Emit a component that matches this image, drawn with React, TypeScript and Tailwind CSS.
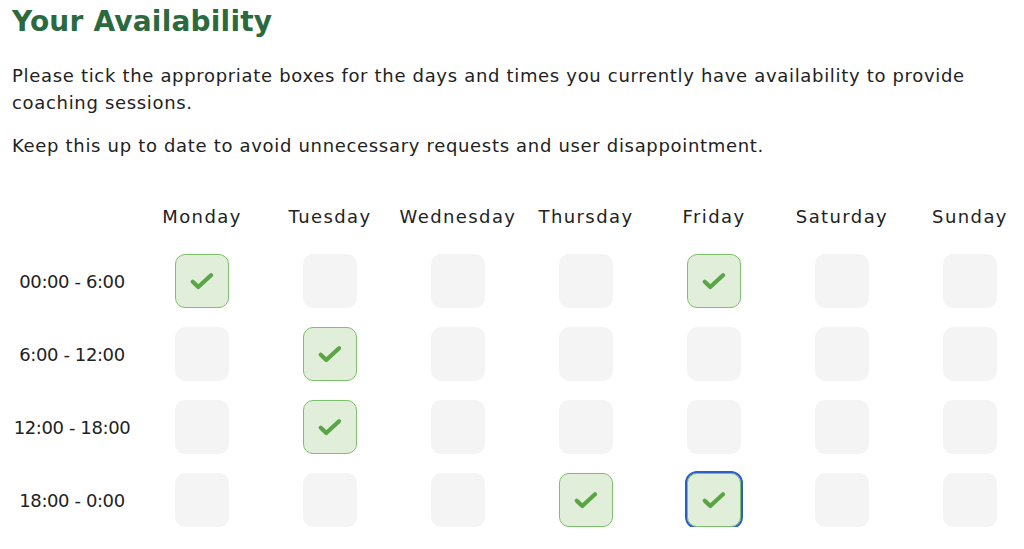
import React from "react";

const days = ["Monday", "Tuesday", "Wednesday", "Thursday", "Friday", "Saturday", "Sunday"];
const slots = ["00:00 - 6:00", "6:00 - 12:00", "12:00 - 18:00", "18:00 - 0:00"];
const checked: Record<string, boolean> = {
  "0-0": true,
  "0-4": true,
  "1-1": true,
  "2-1": true,
  "3-3": true,
  "3-4": true,
};

function Check() {
  return (
    <svg width="30" height="30" viewBox="0 0 24 24" fill="none">
      <path d="M4.6 12.6l4.4 4.2L19.2 7.4" stroke="#5aa646" strokeWidth="3.4" strokeLinecap="round" strokeLinejoin="round" />
    </svg>
  );
}

export default function App() {
  return (
    <div className="w-full overflow-hidden bg-white px-3 text-[#222222] font-['DejaVu_Sans',sans-serif]">
      <h1 className="pt-[2px] text-[28px] font-bold leading-[40px] tracking-[0.2px] text-[#2b6a3e]">Your Availability</h1>
      <p className="mt-[20px] text-[18px] leading-[27px] tracking-[0.68px]">
        Please tick the appropriate boxes for the days and times you currently have availability to provide coaching sessions.
      </p>
      <p className="mt-[16px] text-[18px] leading-[27px] tracking-[0.68px]">
        Keep this up to date to avoid unnecessary requests and user disappointment.
      </p>
      <div className="mt-[44px] w-[1022px]">
        <div className="grid grid-cols-[126px_repeat(7,128px)] h-[26px] items-center text-[18px] tracking-[1.4px]">
          <div />
          {days.map((d) => (
            <div key={d} className="whitespace-nowrap text-center">{d}</div>
          ))}
        </div>
        <div className="mt-[25px] grid grid-cols-[126px_repeat(7,128px)] gap-y-[19px]">
          {slots.map((s, r) => (
            <React.Fragment key={s}>
              <div className="flex h-[54px] items-center justify-center whitespace-nowrap pr-[6px] text-[18px] tracking-[-0.4px]">{s}</div>
              {days.map((d, c) => {
                const on = checked[`${r}-${c}`];
                const focus = r === 3 && c === 4;
                return (
                  <div key={d} className="flex items-center justify-center">
                    <div
                      className={
                        on
                          ? `flex h-[54px] w-[54px] items-center justify-center rounded-[10px] border border-[#7cc06b] bg-[#e1efda] ${focus ? "outline-2 outline-[#2c5fc4]" : ""}`
                          : "h-[54px] w-[54px] rounded-[10px] bg-[#f4f4f4]"
                      }
                    >
                      {on && <Check />}
                    </div>
                  </div>
                );
              })}
            </React.Fragment>
          ))}
        </div>
      </div>
    </div>
  );
}
